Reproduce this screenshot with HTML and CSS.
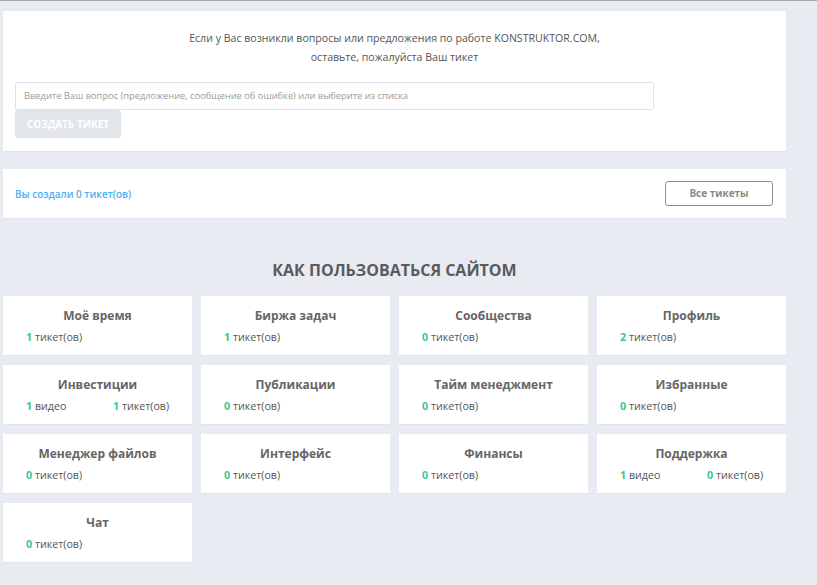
FILE: index.html
```html
<!DOCTYPE html>
<html lang="ru">
<head>
<meta charset="utf-8">
<link rel="stylesheet" href="styles.css">
</head>
<body>
<div class="topline"></div>
<div class="page">
  <section class="card ask">
    <p class="ask-text">Если у Вас возникли вопросы или предложения по работе KONSTRUKTOR.COM,<br>оставьте, пожалуйста Ваш тикет</p>
    <div class="ask-input">Введите Ваш вопрос (предложение, сообщение об ошибке) или выберите из списка</div>
    <div class="ask-btn">СОЗДАТЬ ТИКЕТ</div>
  </section>
  <section class="card mine">
    <span class="mine-text">Вы создали 0 тикет(ов)</span>
    <span class="mine-btn">Все тикеты</span>
  </section>
  <h2 class="howto">КАК ПОЛЬЗОВАТЬСЯ САЙТОМ</h2>
  <div class="grid">
    <div class="tile"><div class="t-title">Моё время</div><div class="t-counts"><span class="c"><b>1</b> тикет(ов)</span></div></div>
    <div class="tile"><div class="t-title">Биржа задач</div><div class="t-counts"><span class="c"><b>1</b> тикет(ов)</span></div></div>
    <div class="tile"><div class="t-title">Сообщества</div><div class="t-counts"><span class="c"><b>0</b> тикет(ов)</span></div></div>
    <div class="tile"><div class="t-title">Профиль</div><div class="t-counts"><span class="c"><b>2</b> тикет(ов)</span></div></div>
    <div class="tile"><div class="t-title">Инвестиции</div><div class="t-counts"><span class="c first"><b>1</b> видео</span><span class="c"><b>1</b> тикет(ов)</span></div></div>
    <div class="tile"><div class="t-title">Публикации</div><div class="t-counts"><span class="c"><b>0</b> тикет(ов)</span></div></div>
    <div class="tile"><div class="t-title">Тайм менеджмент</div><div class="t-counts"><span class="c"><b>0</b> тикет(ов)</span></div></div>
    <div class="tile"><div class="t-title">Избранные</div><div class="t-counts"><span class="c"><b>0</b> тикет(ов)</span></div></div>
    <div class="tile"><div class="t-title">Менеджер файлов</div><div class="t-counts"><span class="c"><b>0</b> тикет(ов)</span></div></div>
    <div class="tile"><div class="t-title">Интерфейс</div><div class="t-counts"><span class="c"><b>0</b> тикет(ов)</span></div></div>
    <div class="tile"><div class="t-title">Финансы</div><div class="t-counts"><span class="c"><b>0</b> тикет(ов)</span></div></div>
    <div class="tile"><div class="t-title">Поддержка</div><div class="t-counts"><span class="c first"><b>1</b> видео</span><span class="c"><b>0</b> тикет(ов)</span></div></div>
    <div class="tile"><div class="t-title">Чат</div><div class="t-counts"><span class="c"><b>0</b> тикет(ов)</span></div></div>
  </div>
</div>
</body>
</html>
```

FILE: styles.css
```css
* { box-sizing: border-box; }
html, body {
  margin: 0;
  padding: 0;
  background: #e8ebf2;
  font-family: "Open Sans", "Liberation Sans", sans-serif;
  color: #555;
}
.topline {
  height: 1px;
  background: #a9a9a9;
}
.page {
  width: 786px;
  padding-left: 3px;
  padding-bottom: 20px;
}
.card {
  background: #fff;
  border-bottom: 1px solid #e0e4ea;
}
.ask {
  margin-top: 10px;
  padding: 18px 12px 13px;
}
.ask-text {
  margin: 0;
  text-align: center;
  font-size: 10.6px;
  line-height: 19px;
  color: #555;
}
.ask-input {
  margin-top: 15px;
  width: 639px;
  height: 28px;
  border: 1px solid #dde1e6;
  border-radius: 2px;
  padding-left: 8px;
  font-size: 9.3px;
  line-height: 26px;
  color: #9a9a9a;
  white-space: nowrap;
}
.ask-btn {
  width: 106px;
  height: 28px;
  background: #e2e6eb;
  border-radius: 2px;
  color: #fff;
  font-weight: 700;
  font-size: 10px;
  line-height: 28px;
  text-align: center;
}
.mine {
  margin-top: 17px;
  height: 50px;
  display: flex;
  align-items: center;
  justify-content: space-between;
  padding: 0 13px 0 12px;
}
.mine-text {
  font-size: 10px;
  font-weight: 600;
  color: #4aaef0;
}
.mine-btn {
  width: 108px;
  height: 25px;
  border: 1px solid #8f8f8f;
  border-radius: 3px;
  font-size: 10px;
  font-weight: 700;
  color: #8a8a8a;
  line-height: 23px;
  text-align: center;
}
.howto {
  margin: 40px 0 15px;
  text-align: center;
  font-size: 16px;
  line-height: 22px;
  font-weight: 700;
  color: #5b5b5b;
}
.grid {
  display: grid;
  grid-template-columns: repeat(4, 189px);
  grid-auto-rows: 60px;
  gap: 9px;
}
.tile {
  background: #fff;
  border-bottom: 1px solid #e0e4ea;
  padding: 11px 0 0 23px;
}
.t-title {
  margin-left: -23px;
  text-align: center;
  font-size: 12px;
  font-weight: 700;
  line-height: 18px;
  color: #666;
}
.t-counts {
  margin-top: 4px;
  display: flex;
  font-size: 10.7px;
  line-height: 16px;
  color: #555;
}
.c b {
  color: #36c794;
  font-weight: 700;
}
.c.first {
  width: 87px;
}
```
